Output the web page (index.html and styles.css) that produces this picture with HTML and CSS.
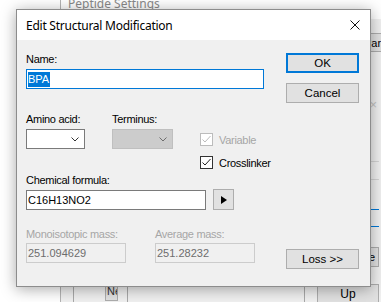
FILE: index.html
```html
<!DOCTYPE html>
<html lang="en">
  <head>
    <meta charset="UTF-8" />
    <title>Edit Structural Modification</title>
    <link rel="stylesheet" href="styles.css">
  </head>
  <body>
    <div class="desk">
      <!-- Window behind the dialog -->
      <div class="bg-window">
        <div class="bg-title">Peptide Settings</div>
        <div class="bg-body">
          <div class="bg-gutter"></div>
          <div class="bg-panel">
            <div class="bg-foot">
              <div class="bg-btn bg-new">New</div>
              <div class="bg-split"></div>
            </div>
          </div>
          <div class="bg-side">
            <div class="bg-btn bg-params">Params</div>
            <div class="bg-x">&times;</div>
            <div class="bg-row"></div>
            <div class="bg-row bg-sel"></div>
            <div class="bg-btn bg-delete">Delete</div>
            <div class="bg-btn bg-up">Up</div>
          </div>
        </div>
      </div>

      <!-- Edit dialog -->
      <div class="dialog">
        <div class="titlebar">
          <span>Edit Structural Modification</span>
          <svg class="close" width="10" height="10" viewBox="0 0 10 10">
            <path d="M0.5 0.5 L9.5 9.5 M9.5 0.5 L0.5 9.5" stroke="#111" stroke-width="1" fill="none" />
          </svg>
        </div>

        <div class="dlg-body">
          <div class="main">
            <div class="lbl">Name:</div>
            <div class="textbox focus name-box"><span class="sel">BPA</span></div>

            <div class="row1">
              <div class="field">
                <div class="lbl">Amino acid:</div>
                <div class="combo amino">
                  <svg width="8" height="5" viewBox="0 0 8 5">
                    <path d="M0.5 0.5 L4 4 L7.5 0.5" stroke="#333" fill="none" />
                  </svg>
                </div>
              </div>
              <div class="field terminus">
                <div class="lbl">Terminus:</div>
                <div class="combo disabled term-box">
                  <svg width="8" height="5" viewBox="0 0 8 5">
                    <path d="M0.5 0.5 L4 4 L7.5 0.5" stroke="#6d6d6d" fill="none" />
                  </svg>
                </div>
              </div>
              <div class="checks">
                <div class="check disabled">
                  <span class="box">
                    <svg width="11" height="11" viewBox="0 0 11 11">
                      <path d="M1.5 5.5 L4 8 L9.5 2" stroke="#bcbcbc" stroke-width="1" fill="none" />
                    </svg>
                  </span>
                  <span>Variable</span>
                </div>
                <div class="check">
                  <span class="box">
                    <svg width="11" height="11" viewBox="0 0 11 11">
                      <path d="M1.5 5.5 L4 8 L9.5 2" stroke="#222" stroke-width="1" fill="none" />
                    </svg>
                  </span>
                  <span>Crosslinker</span>
                </div>
              </div>
            </div>

            <div class="lbl formula-lbl">Chemical formula:</div>
            <div class="formula-row">
              <div class="textbox formula-box">C16H13NO2</div>
              <div class="btn arrow-btn">
                <svg width="6" height="8" viewBox="0 0 6 8">
                  <path d="M0 0 L6 4 L0 8 Z" fill="#000" />
                </svg>
              </div>
            </div>

            <div class="mass-row">
              <div class="field">
                <div class="lbl dim">Monoisotopic mass:</div>
                <div class="textbox readonly mass-box">251.094629</div>
              </div>
              <div class="field">
                <div class="lbl dim">Average mass:</div>
                <div class="textbox readonly mass-box">251.28232</div>
              </div>
            </div>
          </div>

          <div class="side">
            <div class="btn default">OK</div>
            <div class="btn">Cancel</div>
            <div class="btn loss">Loss &gt;&gt;</div>
          </div>
        </div>
      </div>
    </div>
  </body>
</html>
```

FILE: styles.css
```css
body {
  margin: 0;
  padding: 0;
  background: #ffffff;
  font-family: "Liberation Sans", Arial, sans-serif;
  font-size: 11px;
  color: #000;
}

.desk {
  position: relative;
  width: 381px;
  height: 302px;
  overflow: hidden;
}

/* Background window */
.bg-window {
  position: absolute;
  left: 60px;
  top: -12px;
  width: 340px;
  height: 330px;
  border: 1px solid #b4b4b4;
  background: #f0f0f0;
  display: flex;
  flex-direction: column;
}

.bg-title {
  height: 30px;
  line-height: 30px;
  background: #fff;
  padding-left: 7px;
  font-family: "Noto Sans", sans-serif;
  font-size: 12px;
  color: #8a8a8a;
}

.bg-body {
  flex: 1;
  display: flex;
}

.bg-gutter {
  width: 12px;
}

.bg-panel {
  width: 232px;
  box-sizing: border-box;
  border-left: 1px solid #a9a9a9;
  border-right: 1px solid #a9a9a9;
  padding-top: 262px;
}

.bg-foot {
  display: flex;
  padding-left: 31px;
}

.bg-btn {
  background: #e1e1e1;
  border: 1px solid #adadad;
  box-sizing: border-box;
  height: 20px;
  line-height: 18px;
  overflow: hidden;
  white-space: nowrap;
}

.bg-new {
  width: 13px;
  padding-left: 1px;
  color: #333;
}

.bg-split {
  width: 1px;
  height: 40px;
  margin-left: 9px;
  background: #a9a9a9;
}

.bg-side {
  width: 62px;
  margin-left: 12px;
  display: flex;
  flex-direction: column;
  padding-top: 14px;
}

.bg-params {
  height: 19px;
  padding-left: 46px;
  width: 90px;
}

.bg-x {
  margin-top: 46px;
  height: 14px;
  line-height: 14px;
  text-align: right;
  padding-right: 2px;
  color: #c4c4c4;
  font-size: 13px;
}

.bg-row {
  margin-top: 49px;
  height: 17px;
  border-top: 1px solid #d4d4d4;
  border-bottom: 1px solid #d4d4d4;
}

.bg-sel {
  margin-top: 29px;
  height: 16px;
  border-color: #0078d7;
}

.bg-delete {
  margin-top: 20px;
  text-align: right;
  padding-right: 3px;
}

.bg-up {
  margin-top: 17px;
  text-align: center;
  font-size: 12px;
}

/* Dialog */
.dialog {
  position: absolute;
  left: 16px;
  top: 9px;
  width: 355px;
  height: 278px;
  box-sizing: border-box;
  border: 1px solid #8c8c8c;
  background: #f0f0f0;
  box-shadow: 0 2px 14px rgba(0, 0, 0, 0.35);
  display: flex;
  flex-direction: column;
}

.titlebar {
  height: 30px;
  flex-shrink: 0;
  background: #fff;
  display: flex;
  align-items: center;
  justify-content: space-between;
  padding: 0 10px 0 9px;
  font-family: "Noto Sans", sans-serif;
  font-size: 12px;
  letter-spacing: -0.25px;
}

.close {
  display: block;
}

.dlg-body {
  flex: 1;
  display: flex;
  padding: 13px 11px 17px 9px;
}

.main {
  width: 250px;
  display: flex;
  flex-direction: column;
}

.lbl {
  height: 13px;
  line-height: 13px;
  letter-spacing: -0.3px;
  margin-bottom: 3px;
  white-space: nowrap;
}

.lbl.dim {
  color: #a6a6a6;
  margin-bottom: 2px;
}

.textbox {
  box-sizing: border-box;
  height: 20px;
  border: 1px solid #7a7a7a;
  background: #fff;
  line-height: 18px;
  padding-left: 1px;
  white-space: nowrap;
}

.textbox.focus {
  border-color: #0078d7;
}

.textbox.readonly {
  background: #f0f0f0;
  border-color: #cccccc;
  color: #6d6d6d;
}

.name-box {
  width: 238px;
}

.sel {
  background: #0078d7;
  color: #fff;
  padding: 1px 1px 2px 0;
}

.row1 {
  display: flex;
  margin-top: 24px;
}

.terminus {
  margin-left: 27px;
}

.combo {
  box-sizing: border-box;
  height: 20px;
  border: 1px solid #7a7a7a;
  background: #fff;
  display: flex;
  align-items: center;
  justify-content: flex-end;
  padding-right: 5px;
}

.combo svg {
  display: block;
}

.combo.amino {
  width: 59px;
}

.combo.disabled {
  width: 61px;
  background: #cccccc;
  border-color: #bfbfbf;
}

.checks {
  margin-left: 27px;
  padding-top: 20px;
  display: flex;
  flex-direction: column;
  gap: 10px;
}

.check {
  display: flex;
  align-items: center;
  height: 13px;
  letter-spacing: -0.3px;
}

.check .box {
  box-sizing: border-box;
  width: 13px;
  height: 13px;
  border: 1px solid #333;
  background: #fff;
  margin-right: 6px;
}

.check .box svg {
  display: block;
}

.check.disabled {
  color: #a6a6a6;
}

.check.disabled .box {
  border-color: #bcbcbc;
}

.formula-lbl {
  margin-top: 5px;
}

.formula-row {
  display: flex;
  align-items: center;
}

.formula-box {
  width: 180px;
}

.btn {
  box-sizing: border-box;
  height: 20px;
  border: 1px solid #adadad;
  background: #e1e1e1;
  display: flex;
  align-items: center;
  justify-content: center;
  font-size: 11.5px;
}

.arrow-btn {
  width: 21px;
  height: 21px;
  margin-left: 7px;
  margin-top: -1px;
}

.mass-row {
  display: flex;
  gap: 29px;
  margin-top: 18px;
}

.mass-box {
  width: 100px;
}

.side {
  margin-left: auto;
  width: 73px;
  display: flex;
  flex-direction: column;
  gap: 10px;
}

.btn.default {
  border: 2px solid #0078d7;
}

.btn.loss {
  margin-top: auto;
}
```
